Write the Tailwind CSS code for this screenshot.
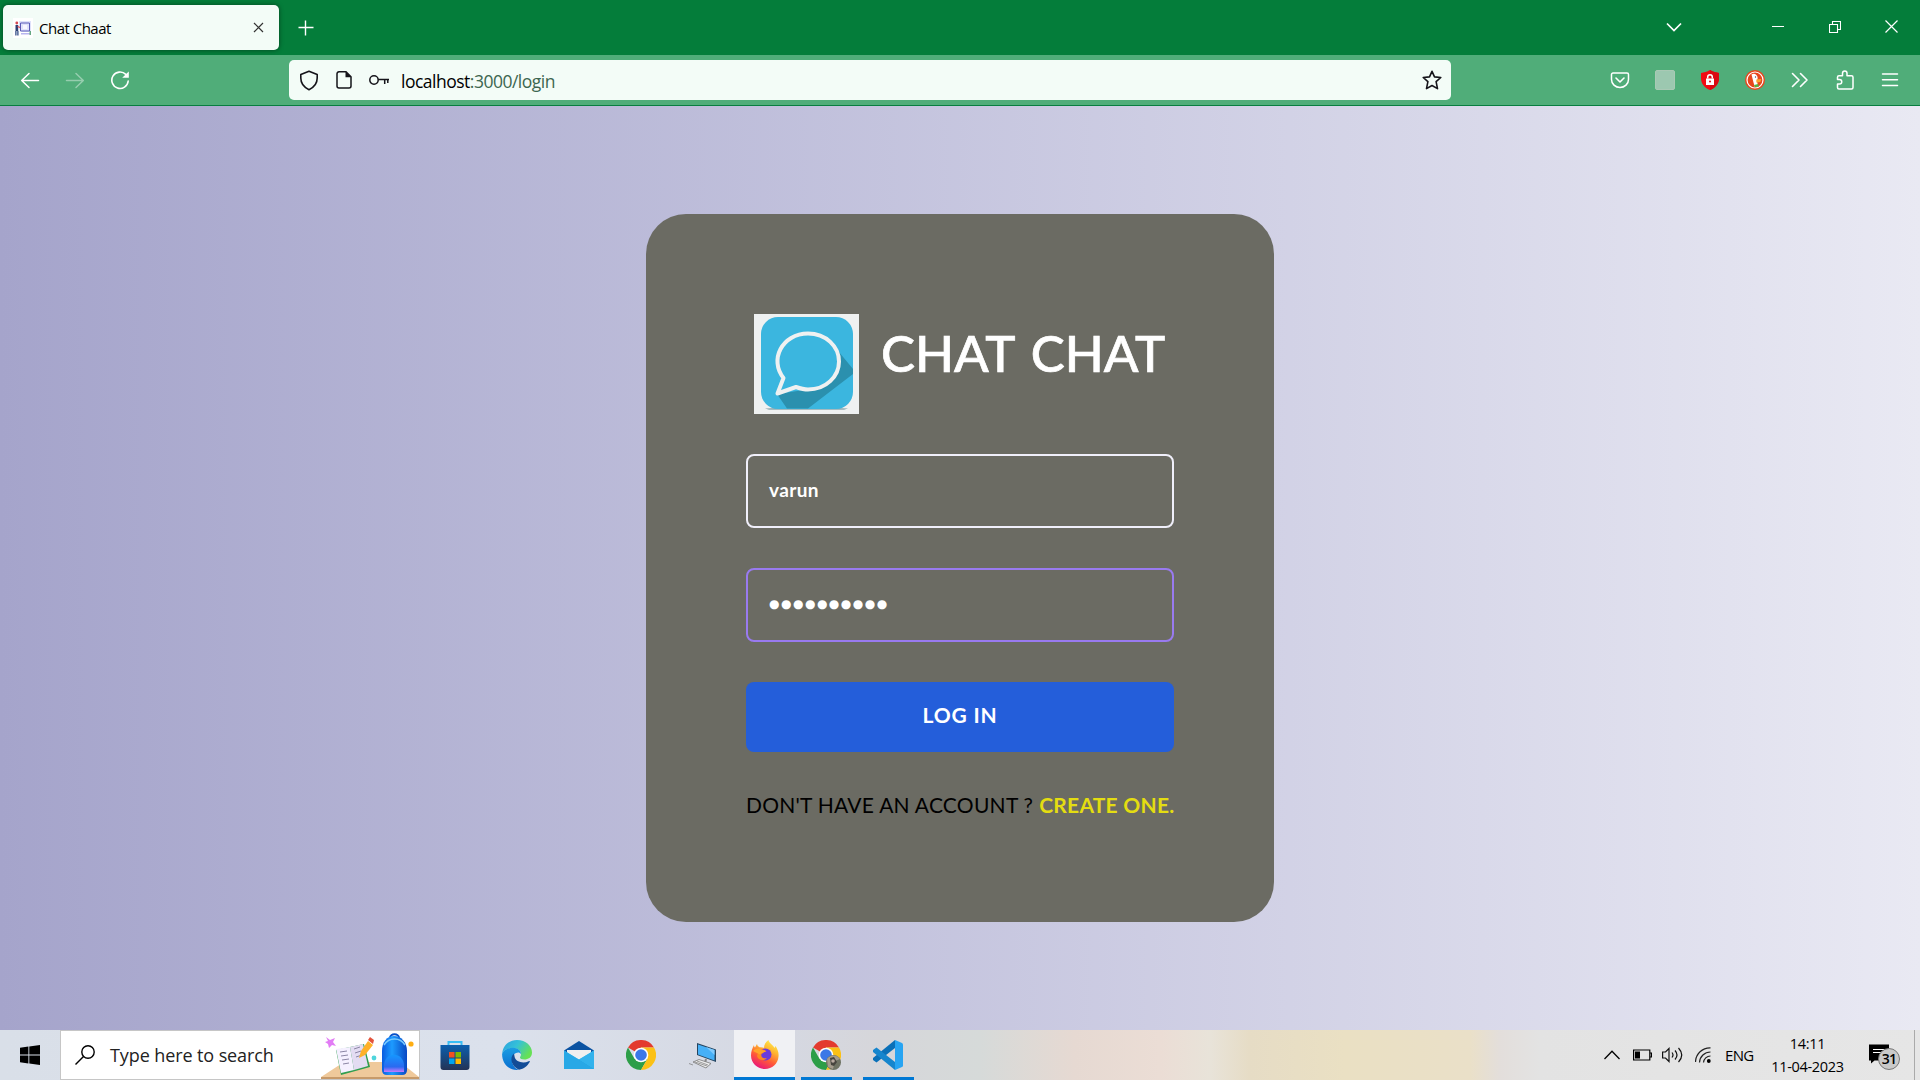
<!DOCTYPE html>
<html lang="en">
<head>
<meta charset="utf-8">
<title>Chat Chaat</title>
<script src="https://cdn.jsdelivr.net/npm/@tailwindcss/browser@4"></script>
</head>
<body class="flex h-[1080px] w-[1920px] flex-col overflow-hidden font-['Open_Sans',sans-serif] text-black">

<!-- Tab strip -->
<header class="flex h-[55px] shrink-0 items-center bg-[#047d3a] text-white">
  <div class="ml-[3px] flex h-[45px] w-[276px] items-center rounded-[5px] bg-[#f3fcf7] pl-[10px] pr-[15px] text-black shadow-[0_0_5px_rgba(0,0,0,0.45)]">
    <svg class="size-5" viewBox="0 0 20 20"><rect width="20" height="20" fill="#fff"/><path d="M6 3h12v11H9l-3-3z" fill="#dfe2fa"/><path d="M7.500 5h9v8h-9z" fill="none" stroke="#5b5bb8" stroke-width="1"/><path d="M10 7h4v4h-4z" fill="#f8f7ff"/><path d="M2.500 7h2.700v6H2.500z" fill="#2c3f73"/><path d="M2.300 13h1.200v4.500H2.300zM4.300 13h1.200v4.500H4.300z" fill="#24407f"/><circle cx="3.800" cy="5" r="1.400" fill="#d3474f"/><path d="M4.500 8.500l2.500 1" stroke="#e4434b" stroke-width="1.300"/><path d="M8 15h9v1.500H8z" fill="#b8b5ee"/><path d="M16.500 13H18v4h-1.500z" fill="#66a982"/></svg>
    <span class="ml-[6px] mt-px w-[200px] whitespace-nowrap text-[15px] tracking-[-0.5px]">Chat Chaat</span>
    <svg class="ml-auto size-[11px]" viewBox="0 0 11 11"><path d="M1 1l9 9M10 1l-9 9" stroke="#333" stroke-width="1.200" fill="none"/></svg>
  </div>
  <svg class="ml-[19px] size-4" viewBox="0 0 16 16"><path d="M7.500 .5v15M.5 7.500h15" stroke="#fff" stroke-width="1.400"/></svg>
  <div class="ml-auto flex items-center pr-[22px] pb-[2px]">
    <svg class="mr-[90px] h-[10px] w-4" viewBox="0 0 16 10"><path d="M1 1.500l7 7 7-7" fill="none" stroke="#fff" stroke-width="1.700"/></svg>
    <svg class="mr-[45px] h-3 w-3" viewBox="0 0 12 12"><path d="M0 5.500h12" stroke="#fff" stroke-width="1"/></svg>
    <svg class="mr-[44px] size-3" viewBox="0 0 12 12"><path d="M.5 3.500h8v8h-8zM3.500 3.500v-3h8v8h-3" fill="none" stroke="#fff" stroke-width="1.100"/></svg>
    <svg class="size-[13px]" viewBox="0 0 13 13"><path d="M.5.5l12 12M12.500.5l-12 12" fill="none" stroke="#fff" stroke-width="1.200"/></svg>
  </div>
</header>

<!-- Navigation toolbar -->
<nav class="flex h-[51px] shrink-0 items-center border-b border-[#087e40] bg-[#50ad79] pl-5">
  <svg class="size-5" viewBox="0 0 20 20"><path d="M18.500 10.500H2M9 3.500l-7.300 7L9 17.500" fill="none" stroke="#fff" stroke-width="1.500" stroke-linejoin="round" stroke-linecap="round"/></svg>
  <svg class="ml-[25px] size-5 opacity-40" viewBox="0 0 20 20"><path d="M1.500 10.500H18M11 3.500l7.300 7-7.300 7" fill="none" stroke="#fff" stroke-width="1.500" stroke-linejoin="round" stroke-linecap="round"/></svg>
  <svg class="ml-[25px] size-5" viewBox="0 0 20 20"><path d="M15.800 4.400A8.200 8.200 0 1 0 18.200 11" fill="none" stroke="#fff" stroke-width="1.600" stroke-linecap="round"/><path d="M18.800 1.500v6.200h-6.600z" fill="#fff"/></svg>
  <div class="ml-[159px] flex h-10 w-[1162px] items-center rounded-[5px] bg-[#f3fcf7] pl-[10px] pr-[9px]">
    <svg class="h-[21px] w-5" viewBox="0 0 20 21"><path d="M10 1.200l8.200 3.400v3.500c0 5.500-3.800 9.600-8.200 11.600C5.600 17.700 1.800 13.600 1.800 8.100V4.600z" fill="none" stroke="#15141a" stroke-width="1.600" stroke-linejoin="round"/></svg>
    <svg class="ml-[17px] h-5 w-4" viewBox="0 0 16 20"><path d="M3 1.800h7l5 5V16a2 2 0 0 1-2 2H3a2 2 0 0 1-2-2V3.800a2 2 0 0 1 2-2z" fill="none" stroke="#15141a" stroke-width="1.500"/><path d="M9.500 1.500v5.800h5.800z" fill="#15141a"/></svg>
    <svg class="ml-[17px] h-5 w-5" viewBox="0 0 20 20"><circle cx="5" cy="10" r="4.200" fill="none" stroke="#15141a" stroke-width="1.500"/><path d="M9.200 9.600H20M18.800 9.600V13M15.700 9.600V14" fill="none" stroke="#15141a" stroke-width="1.500"/></svg>
    <span class="ml-3 mt-[3px] whitespace-nowrap text-[17.500px] tracking-[-0.5px] text-[#3d6650]"><span class="text-black">localhost</span>:3000/login</span>
    <svg class="ml-auto size-5" viewBox="0 0 20 20"><path d="M10 1.300l2.500 5.600 6.300.6-4.700 4.200 1.400 6.900L10 15.500l-5.500 3.100 1.400-6.900L1.200 7.500l6.300-.6z" fill="none" stroke="#15141a" stroke-width="1.600" stroke-linejoin="round"/></svg>
  </div>
  <div class="ml-auto flex items-center gap-[25px] pr-5">
    <svg class="size-5" viewBox="0 0 20 20"><path d="M3 3h14a1.500 1.500 0 0 1 1.500 1.500V9.500a8.500 8 0 0 1-17 0V4.500A1.500 1.500 0 0 1 3 3z" fill="none" stroke="#fff" stroke-width="1.500"/><path d="M6 8l4 4 4-4" fill="none" stroke="#fff" stroke-width="1.600" stroke-linecap="round" stroke-linejoin="round"/></svg>
    <div class="size-5 rounded-[2px] border border-[#a9c9b5] bg-[#9cc8b0]"></div>
    <svg class="size-5" viewBox="0 0 20 20"><path d="M10 0c3 2 6 2.500 9 3v5c0 6-4 10-9 12C5 18 1 14 1 8V3c3-.5 6-1 9-3z" fill="#f20c12"/><path d="M10 0c3 2 6 2.500 9 3v5c0 6-4 10-9 12z" fill="#d90910"/><rect x="6" y="8.500" width="8" height="6.500" fill="#fff"/><path d="M7.700 8.500V7a2.300 2.300 0 0 1 4.600 0v1.500" fill="none" stroke="#fff" stroke-width="1.500"/><circle cx="10" cy="11.500" r="1" fill="#e00b11"/></svg>
    <svg class="size-5" viewBox="0 0 20 20"><circle cx="10" cy="10" r="10" fill="#e8461d"/><circle cx="10" cy="10" r="8" fill="none" stroke="#fff" stroke-width="1.200"/><path d="M6.500 4.500C9 2.500 12.500 4.500 12.700 8l-.7 3 1 5-3 1.500-1.500-5z" fill="#fff"/><path d="M11.300 9.500l5-.5-1 3-4 .5z" fill="#fba52d"/><path d="M9 15l4-1 1 2.500-4 .8z" fill="#53b53f"/><circle cx="10.500" cy="7" r=".7" fill="#34507a"/></svg>
    <svg class="size-5" viewBox="0 0 20 20"><path d="M2.500 3.500L9 10l-6.500 6.500M10.500 3.500L17 10l-6.500 6.500" fill="none" stroke="#fff" stroke-width="1.600" stroke-linecap="round" stroke-linejoin="round"/></svg>
    <svg class="size-5" viewBox="0 0 20 20"><path d="M7.500 5.700V3.300a2.200 2.200 0 0 1 4.500 0v2.400h4.500a1.500 1.500 0 0 1 1.500 1.500v10.300a1.500 1.500 0 0 1-1.500 1.500H4a1.500 1.500 0 0 1-1.500-1.500V14h2a2.200 2.200 0 0 0 0-4.500h-2V7.200A1.500 1.500 0 0 1 4 5.700z" fill="none" stroke="#fff" stroke-width="1.500" stroke-linejoin="round"/></svg>
    <svg class="size-5" viewBox="0 0 20 20"><path d="M2.500 4h15M2.500 9.800h15M2.500 15.500h15" stroke="#fff" stroke-width="1.500" fill="none" stroke-linecap="round"/></svg>
  </div>
</nav>

<!-- Login page -->
<main class="flex h-[924px] shrink-0 items-center justify-center bg-linear-to-r from-[#a5a4cb] to-[#e9e9f3] font-['Lato',sans-serif]">
  <form class="flex h-[708px] w-[628px] flex-col gap-10 rounded-[40px] bg-[#6b6b63] p-[100px]">
    <div class="flex h-[100px] items-start pl-2">
      <svg class="h-[100px] w-[105px]" viewBox="0 0 105 100"><rect width="105" height="100" fill="#eff1f1"/><path d="M11 94.500q41-3 83 0l-4 1.200H15z" fill="#8da9b0"/><rect x="7" y="3" width="92" height="92" rx="17" fill="#3bb6df"/><path d="M85 38l14 17V60L54 94.500H33L23 80l27-4 22-8z" fill="#2b90ae"/><path d="M54 19.500c18 0 31 13 31 28S72 75.500 54 75.500c-4 0-7-.8-12-2.500L23.500 79.500 29.500 64C15 46 28 19.500 54 19.500z" fill="#3bb6df" stroke="#eff1f1" stroke-width="4" stroke-linejoin="round"/></svg>
      <h1 class="ml-[22px] mt-2 whitespace-nowrap text-[51px] leading-[62px] font-medium text-white [word-spacing:4px] [-webkit-text-stroke:0.7px_white]">CHAT CHAT</h1>
    </div>
    <div class="flex h-[74px] items-center rounded-lg border-2 border-[#f0effa] px-[21px] pb-[2px] text-[19px] leading-6 font-bold tracking-[0.4px] text-white">varun</div>
    <div class="flex h-[74px] items-center rounded-lg border-2 border-[#997af0] px-[21px] pb-[2px] font-['DejaVu_Sans',sans-serif] text-[12px] leading-5 tracking-[1.500px] text-white">●●●●●●●●●●</div>
    <div class="flex h-[70px] items-center justify-center rounded-lg bg-[#245eda] pb-1 text-[21px] leading-6 font-bold tracking-[0.8px] text-white">LOG IN</div>
    <p class="mt-px flex h-6 items-center gap-[6px] whitespace-nowrap text-[21px] leading-6 tracking-[0.25px]"><span>DON'T HAVE AN ACCOUNT ?</span><b class="text-[#e4dd11]">CREATE ONE.</b></p>
  </form>
</main>

<!-- Taskbar -->
<footer class="flex h-[50px] shrink-0 items-center bg-[linear-gradient(90deg,#d9dfe8_0px,#dbe1ec_500px,#d5d8e2_780px,#d6d6da_880px,#d6dad9_980px,#e6d9d2_1075px,#ebddd5_1160px,#e8e3d9_1210px,#e6dcc5_1250px,#eae0c3_1345px,#eae0c8_1470px,#e3dedb_1500px,#e3e3e3_1540px,#e6e6e6_1920px)]">
  <svg class="ml-5 size-5 shrink-0" viewBox="0 0 20 20"><path d="M0 2.800L8.400 1.500v8H0zM9.300 1.400L20 0v9.500H9.300zM0 10.400h8.400v8.100L0 17.300zM9.300 10.400H20V20L9.300 18.600z"/></svg>
  <div class="ml-5 flex h-[50px] w-[360px] shrink-0 items-center border border-[#c6c6c6] bg-white pl-[14px]">
    <svg class="size-5 shrink-0" viewBox="0 0 20 20"><circle cx="13" cy="7" r="6.200" fill="none" stroke="#000" stroke-width="1.400"/><path d="M8.500 11.500L.5 19.500" stroke="#000" stroke-width="1.400"/></svg>
    <span class="ml-[15px] whitespace-nowrap text-[18px] tracking-[-0.1px] text-[#222]">Type here to search</span>
    <svg class="ml-auto h-12 w-[98px] shrink-0" viewBox="0 0 98 48"><defs><linearGradient id="bag" x2="1"><stop stop-color="#0a5be0"/><stop offset=".4" stop-color="#1d9bff"/><stop offset="1" stop-color="#0848c4"/></linearGradient><linearGradient id="pocket" y2="1" x2="0"><stop stop-color="#1597ff"/><stop offset=".7" stop-color="#2a6af0"/><stop offset="1" stop-color="#c77bff"/></linearGradient></defs><path d="M0 46l23-15h56l19 15z" fill="#efc99b"/><path d="M0 46h98v2H0z" fill="#c79a6a"/><path d="M5 6l4 3 5-2-2 4 3 4-4-1-3 3-1-4-3-2 3-1z" fill="#e27cf5"/><path d="M15 19l28-6 6 23-29 8z" fill="#2f9e4f"/><path d="M15 18l14-2 4 23-13 3z" fill="#f5f0ff"/><path d="M29 16l13-3 5 22-14 4z" fill="#e3dcf2"/><path d="M19 21l7-1M20 25l7-1M21 29l7-1M22 33l6-1M33 18l6-2M34 22l6-2M35 26l6-2" stroke="#8c86a5" stroke-width="1"/><path d="M38 27l2-7 7-10 5 4-8 10z" fill="#ffb129"/><path d="M47 9l2-3 4 3-1 4z" fill="#e4533b"/><circle cx="53" cy="27" r="2.400" fill="#4fd5dc"/><path d="M69 7c0-5 9-5 9 0" fill="none" stroke="#0750c8" stroke-width="2"/><path d="M61 20c0-9 5-15 12-15s13 6 13 15v19q0 5-5 5H66q-5 0-5-5z" fill="url(#bag)"/><path d="M63 14c5-8 16-8 21 0" fill="none" stroke="#77caff" stroke-width="1.500"/><path d="M63 35c0-15 20-15 20 0v6H63z" fill="url(#pocket)"/><circle cx="90" cy="13" r="2.600" fill="#ffae12"/></svg>
  </div>

  <div class="ml-1 flex h-[50px] shrink-0">
    <div class="flex w-[62px] items-center justify-center">
      <svg class="size-[30px]" viewBox="0 0 30 30"><defs><linearGradient id="st" x2="0" y2="1"><stop stop-color="#0b5fae"/><stop offset="1" stop-color="#243355"/></linearGradient></defs><path d="M8.500 6V2h13v4" fill="none" stroke="#38bdf5" stroke-width="2"/><path d="M.5 5h29v22a3 3 0 0 1-3 3h-23a3 3 0 0 1-3-3z" fill="url(#st)"/><path d="M9 12h5.500v5.500H9z" fill="#f25022"/><path d="M15.500 12H21v5.500h-5.500z" fill="#7fba00"/><path d="M9 18.500h5.500V24H9z" fill="#00a4ef"/><path d="M15.500 18.500H21V24h-5.500z" fill="#ffb900"/></svg>
    </div>
    <div class="flex w-[62px] items-center justify-center">
      <svg class="size-[30px]" viewBox="0 0 30 30"><defs><linearGradient id="e1" x2="1" y2=".5"><stop stop-color="#2a9fe0"/><stop offset=".5" stop-color="#35c1d8"/><stop offset="1" stop-color="#66e155"/></linearGradient><linearGradient id="e2" x2="0" y2="1"><stop stop-color="#1b9de2"/><stop offset="1" stop-color="#0a6ed0"/></linearGradient></defs><path d="M.2 13.500C1 5.500 7 0 15 0c9 0 15 6 15 12.500 0 5-4 7-7.500 7-3 0-4.500-1-4.500-2 0-.8 1-1.200 1-3.500 0-3-3-6-7.500-6C6 8 1.500 10 .2 13.500z" fill="url(#e1)"/><path d="M.1 14C1 10 6 7.700 11 7.700c5 0 8 3 8 6.300-1-1.500-3-2-5-1-2.500 1-4 4-4 7 0 5 3.500 9 7 9.800C7.500 31 0 24 .1 14z" fill="url(#e2)"/><path d="M12 13.500c-5 4-2.500 13 5 16.200 5-.7 8.500-4 10.700-7.700.4-.8-.3-1.200-1-.8-6 2.800-13 .3-14-4z" fill="#124c97"/></svg>
    </div>
    <div class="flex w-[62px] items-center justify-center">
      <svg class="size-[30px]" viewBox="0 0 30 30"><path d="M0 10.500L15 1l15 9.500V14H0z" fill="#0b53a2"/><path d="M3 10h24v10H3z" fill="#efefef"/><path d="M0 10.500l15 9 15-9V29H0z" fill="#3bc0f2"/><path d="M0 29L15 19.500 30 29z" fill="#249fe0"/><path d="M15 19.500L30 10.500V29z" fill="#32b2ec"/><path d="M0 10.500L30 29H0z" fill="#28a8e6"/></svg>
    </div>
    <div class="flex w-[62px] items-center justify-center">
      <svg class="size-[30px]" viewBox="0 0 30 30"><path d="M2 7.500A15 15 0 0 1 28 7.500H15V15z" fill="#e33b2e"/><path d="M2 7.500A15 15 0 0 0 15 30l6.500-11.200L15 15l-6.500 3.800z" fill="#2d9e48"/><path d="M28 7.500A15 15 0 0 1 15 30l6.500-11.200L15 7.500z" fill="#fbc116"/><circle cx="15" cy="15" r="7.300" fill="#fff"/><circle cx="15" cy="15" r="5.800" fill="#3b78e7"/></svg>
    </div>
    <div class="flex w-[62px] items-center justify-center">
      <svg class="size-[30px]" viewBox="0 0 30 30"><path d="M9 3l19 6.500V22L9 15z" fill="#26445e"/><path d="M10 4.500L26.500 10v10.500L10 14.500z" fill="#46b0f7"/><path d="M18 7l8.500 3v5z" fill="#7fcbff"/><path d="M18 19l-1 4" stroke="#888" stroke-width="2"/><path d="M5 22l6-2.500 12 4-5 4.500z" fill="#eee" stroke="#777" stroke-width=".8"/><path d="M7 22l12 4M9 21l11 4M1 23.500l4 1.500" stroke="#777" stroke-width=".7"/></svg>
    </div>
    <div class="flex w-[61px] flex-col items-center border-b-[3px] border-[#0078d4] bg-[#f0f1f4] pt-[10px]">
      <svg class="size-[30px]" viewBox="0 0 30 30"><defs><linearGradient id="ff" x1=".8" x2=".3" y2="1"><stop stop-color="#fff44f"/><stop offset=".35" stop-color="#ffb02e"/><stop offset=".65" stop-color="#ff5a38"/><stop offset="1" stop-color="#e8127d"/></linearGradient></defs><path d="M4 5c0 1 .3 2 1 2.500L7 4c.3 1.500 1 2.500 2.500 3.200 2-.2 3.500.2 4.500.8 0-3.500 2-6.500 4.500-8 0 3 5 5 6 8l1-2c2 3 3.500 6.500 3 10.500C28 24 22 29 15 29S1 23.500 1 15.500C1 11 2.500 8 4 5z" fill="url(#ff)"/><circle cx="15.500" cy="14.500" r="6" fill="#6b3bdc"/><path d="M9 10c3-1 6-.5 7.500 1.500-3 .3-3.500 1.500-5 2.500-1 3 2 5 5.500 4-2 3-9 3-10-2z" fill="#ff8a1f"/><path d="M3 11c2-2 4-2.700 7-2 2 1.500 4 1 6 2-2 2-5 1.500-6 3.500z" fill="#ffa52a"/></svg>
    </div>
    <div class="flex w-[62px] flex-col items-center pt-[10px]">
      <svg class="size-[30px]" viewBox="0 0 30 30"><path d="M2 7.500A15 15 0 0 1 28 7.500H15V15z" fill="#e33b2e"/><path d="M2 7.500A15 15 0 0 0 15 30l6.500-11.200L15 15l-6.500 3.800z" fill="#2d9e48"/><path d="M28 7.500A15 15 0 0 1 15 30l6.500-11.200L15 7.500z" fill="#fbc116"/><circle cx="15" cy="15" r="7.300" fill="#fff"/><circle cx="15" cy="15" r="5.800" fill="#3b78e7"/><circle cx="22.500" cy="22.500" r="7.500" fill="#6f7364"/><path d="M16 19c3-4 9-5 13 0l-5 2-2 8-5-2z" fill="#a59c8d"/><path d="M19 18l4-1 3 5-3 4-3-1z" fill="#47453f"/><circle cx="22" cy="21" r="1.800" fill="#b9aaa0"/></svg>
      <div class="mt-[7px] h-[3px] w-[51px] bg-[#0078d4]"></div>
    </div>
    <div class="flex w-[62px] flex-col items-center pt-[10px]">
      <svg class="size-[30px]" viewBox="0 0 30 30"><path d="M22 0v8L3.500 22.500 0 20v-2z" fill="#0a70b8"/><path d="M22 30v-8L3.500 7.500 0 10v2z" fill="#1585cd"/><path d="M22 0l7 3q1 .5 1 1.500v21q0 1-1 1.500l-7 3z" fill="#27a4f2"/></svg>
      <div class="mt-[7px] h-[3px] w-[51px] bg-[#0078d4]"></div>
    </div>
  </div>

  <div class="ml-auto flex h-[50px] shrink-0 items-center">
    <svg class="h-[10px] w-4" viewBox="0 0 16 10"><path d="M.5 9L8 1.200 15.500 9" fill="none" stroke="#000" stroke-width="1.300"/></svg>
    <svg class="ml-[13px] h-3 w-[19px]" viewBox="0 0 19 12"><path d="M.6 1h16.200v10H.6zM17 4h1.500v4H17" fill="none" stroke="#000" stroke-width="1.200"/><path d="M2 2.500h5v7H2z"/></svg>
    <svg class="ml-[10px] h-[18px] w-[21px]" viewBox="0 0 21 18"><path d="M.6 6h2.900L7 2.500v13L3.500 12H.6zM10 6.500q2 2.500 0 5M13 4.500q4 4.500 0 9M16.500 2Q23 9 16.500 16" fill="none" stroke="#111" stroke-width="1.200"/></svg>
    <svg class="ml-3 h-4 w-4" viewBox="0 0 16 16"><path d="M.5 15A14.500 14.500 0 0 1 15.500.8M4.500 15.500A11 11 0 0 1 15.500 5M8.500 15.500a7 7 0 0 1 7-6.500" fill="none" stroke="#222" stroke-width="1.200"/><circle cx="13.800" cy="14" r="1.900"/></svg>
    <span class="ml-[14px] w-[29px] whitespace-nowrap text-[15px] tracking-[-0.7px]">ENG</span>
    <div class="ml-[15px] flex w-[77px] flex-col items-center whitespace-nowrap text-[14.500px] leading-[23px] tracking-[-0.3px]"><span>14:11</span><span>11-04-2023</span></div>
    <div class="relative ml-[23px] h-[30px] w-8">
      <svg class="size-full" viewBox="0 0 32 30"><path d="M0 5h20v16H5.500L2 24v-3H0z" transform="translate(0 -.5)"/><path d="M4 9.500h12M4 12.500h12" stroke="#fff" stroke-width="1.200"/><circle cx="20" cy="19" r="10.500" fill="#c9c9c9" stroke="#777" stroke-width="1"/></svg>
      <span class="absolute left-[10px] top-[9px] w-5 text-center text-[14px] leading-5 font-semibold tracking-[-0.8px]">31</span>
    </div>
    <div class="ml-[13px] mr-[5px] h-[50px] w-px bg-[#aaa]"></div>
  </div>
</footer>
</body>
</html>
